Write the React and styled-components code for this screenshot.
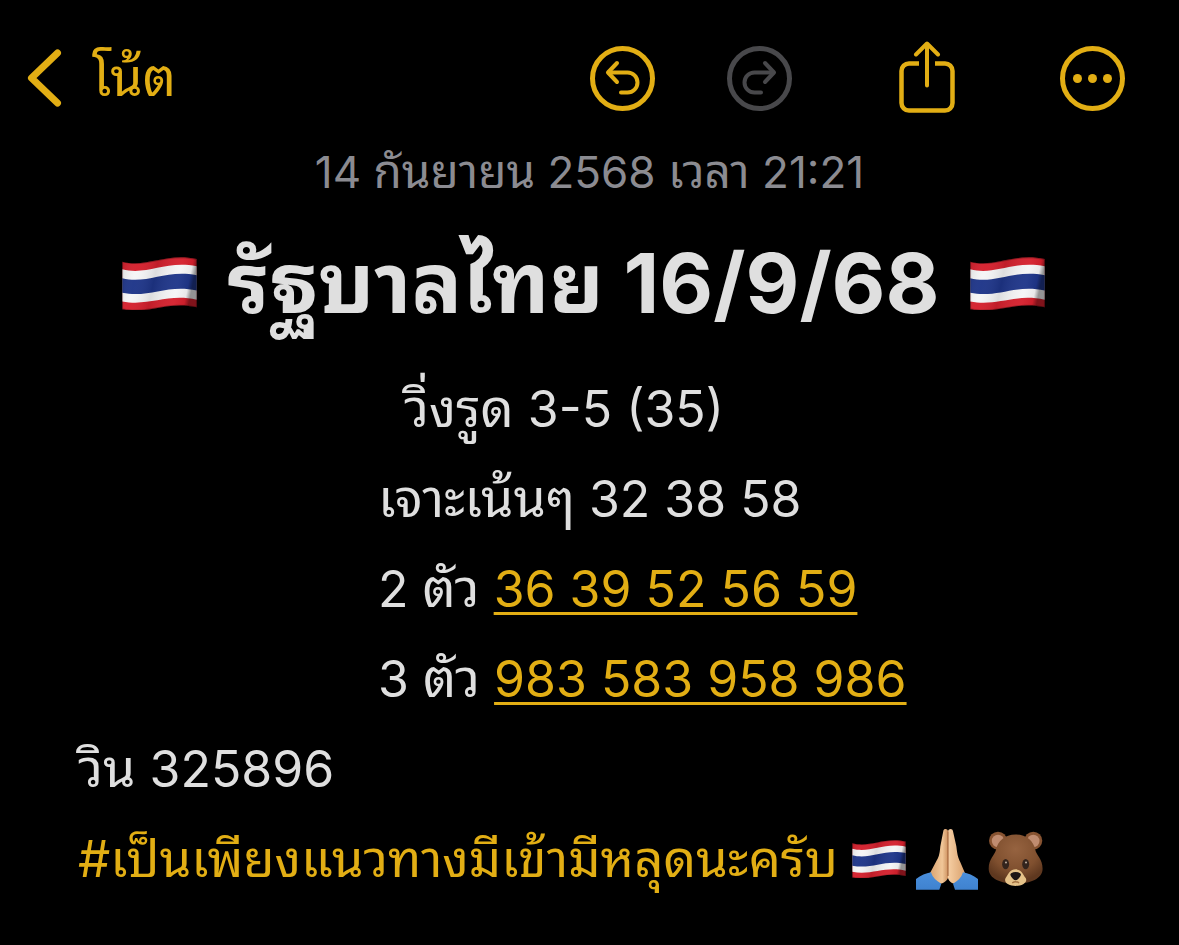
import React from "react";
import styled, { createGlobalStyle } from "styled-components";

const gold = "#e2ae14";
const ink = "#dfdfdf";

const GlobalStyle = createGlobalStyle`
  * { box-sizing: border-box; }
  html, body { margin: 0; background: #000; }
  body { font-family: Inter, "Noto Sans Thai Looped", "Loma", "Garuda", "Waree", "Noto Sans Thai", "Noto Sans", sans-serif; color: ${ink}; }
`;

const Page = styled.div`
  min-height: 100vh;
  background: #000;
`;

const Toolbar = styled.header`
  display: flex;
  align-items: center;
  justify-content: space-between;
  height: 144px;
  padding: 12px 54px 0 26px;
`;

const Actions = styled.div`
  display: flex;
  align-items: center;
  gap: ${(p) => p.$gap}px;
`;

const ToolButton = styled.button`
  display: flex;
  align-items: center;
  gap: 30px;
  padding: 0;
  border: 0;
  background: none;
  font: inherit;
  font-size: 52px;
  line-height: 60px;
  color: ${gold};
  cursor: pointer;
  &:disabled { color: #48484b; cursor: default; }
  svg { display: block; fill: none; stroke: currentColor; stroke-linecap: round; stroke-linejoin: round; }
`;

const ShareTray = styled.path`
  stroke-linecap: butt;
`;

const DateLine = styled.time`
  display: block;
  height: 56px;
  line-height: 56px;
  font-size: 44px;
  text-align: center;
  color: #8b8b91;
  white-space: nowrap;
`;

const Thai = styled.span`
  font-size: ${(p) => p.$size}px;
  line-height: 1;
`;

const Title = styled.h1`
  display: flex;
  align-items: center;
  justify-content: center;
  gap: 30px;
  margin: 0;
  padding: 2px 12px 0 0;
  height: 164px;
  font-size: 83px;
  line-height: 164px;
  font-weight: 700;
  white-space: nowrap;
`;

const Body = styled.main`
  padding: 0 78px;
`;

const Line = styled.p`
  margin: 0;
  padding-left: ${(p) => p.$indent || 0}px;
  height: 90px;
  font-size: 50px;
  line-height: 90px;
  white-space: nowrap;
`;

const TagLine = styled.div`
  display: flex;
  align-items: center;
  height: 90px;
  font-size: 51px;
  line-height: 90px;
  white-space: nowrap;
  color: ${gold};
`;

const NumberLink = styled.a`
  color: ${gold};
  text-decoration: underline;
  text-decoration-thickness: 3px;
  text-underline-offset: 5px;
  text-decoration-skip-ink: none;
`;

const EmojiRow = styled.span`
  display: flex;
  align-items: center;
  gap: 10px;
  margin-left: 14px;
`;

const Drawing = styled.svg`
  display: block;
  flex: none;
`;

function Flag({ width, id }) {
  return (
    <Drawing width={width} height={Math.round((width * 160) / 225)} viewBox="0 0 225 160" role="img" aria-label="ธงชาติไทย">
      <defs>
        <linearGradient id={id} x1="0" x2="1" y1="0" y2="0.15">
          <stop offset="0" stopColor="#000" stopOpacity="0.12" />
          <stop offset="0.22" stopColor="#fff" stopOpacity="0.03" />
          <stop offset="0.48" stopColor="#000" stopOpacity="0.1" />
          <stop offset="0.8" stopColor="#fff" stopOpacity="0.04" />
          <stop offset="0.94" stopColor="#000" stopOpacity="0.05" />
          <stop offset="1" stopColor="#000" stopOpacity="0.4" />
        </linearGradient>
      </defs>
      <path d="M0 14C75 34 130-14 225 6V152C135 132 82 174 0 158Z" fill="#d5202d" />
      <path d="M0 37C75 57 130 9 225 28V129C135 109 82 150 0 134Z" fill="#f5f5f6" />
      <path d="M0 64C75 84 130 36 225 55V101C135 81 82 125 0 108Z" fill="#1e3589" />
      <path d="M0 14C75 34 130-14 225 6V152C135 132 82 174 0 158Z" fill={`url(#${id})`} />
      <path d="M1 15C75 35 130-13 224 7V151C135 131 82 173 1 157Z" fill="none" stroke="#000" strokeOpacity="0.3" strokeWidth="3" />
    </Drawing>
  );
}

function Hands() {
  return (
    <Drawing width="62" height="62" viewBox="0 0 186 186" role="img" aria-label="พนมมือ">
      <defs>
        <linearGradient id="skin-left" x1="0" x2="1">
          <stop offset="0" stopColor="#d9a06c" />
          <stop offset="0.7" stopColor="#f0c698" />
          <stop offset="1" stopColor="#cf9361" />
        </linearGradient>
        <linearGradient id="skin-right" x1="0" x2="1">
          <stop offset="0" stopColor="#f6cfa4" />
          <stop offset="1" stopColor="#d9a06c" />
        </linearGradient>
        <linearGradient id="sleeve" x1="0" x2="0" y1="0" y2="1">
          <stop offset="0" stopColor="#4a8fdc" />
          <stop offset="1" stopColor="#3f82cf" />
        </linearGradient>
      </defs>
      <path d="M96 150V10C95 1 83 1 82 9L73 55C71 82 67 90 60 101L39 141L60 170C80 168 91 161 96 150Z" fill="url(#skin-left)" />
      <path d="M96 150V10C98 1 110 1 111 10L121 55C124 82 127 91 133 103L149 140L128 170C108 168 99 161 96 150Z" fill="url(#skin-right)" />
      <path d="M96 10V144" stroke="#9a5b32" strokeWidth="3" />
      <path d="M0 153Q22 137 45 133Q51 154 76 167L70 185H0Z" fill="url(#sleeve)" />
      <path d="M186 153Q164 137 141 133Q135 154 111 167L117 185H186Z" fill="url(#sleeve)" />
    </Drawing>
  );
}

function Bear() {
  return (
    <Drawing width="56" height="56" viewBox="0 0 162 162" role="img" aria-label="หมี">
      <defs>
        <radialGradient id="fur" cx="0.5" cy="0.3" r="0.65">
          <stop offset="0" stopColor="#966340" />
          <stop offset="0.65" stopColor="#80502f" />
          <stop offset="1" stopColor="#5f381f" />
        </radialGradient>
      </defs>
      <circle cx="29" cy="28" r="26" fill="#875331" />
      <circle cx="29" cy="29" r="18" fill="#c08c70" />
      <circle cx="131" cy="28" r="26" fill="#875331" />
      <circle cx="131" cy="29" r="18" fill="#c08c70" />
      <path d="M80 10C112 10 132 29 137 55C139 69 158 81 158 109C158 138 122 152 80 152C38 152 2 138 2 109C2 81 20 69 23 55C28 29 48 10 80 10Z" fill="url(#fur)" />
      <ellipse cx="51" cy="96" rx="10" ry="15" fill="#33241d" />
      <ellipse cx="109" cy="96" rx="10" ry="15" fill="#33241d" />
      <circle cx="52" cy="91" r="3" fill="#b9a99c" />
      <circle cx="110" cy="91" r="3" fill="#b9a99c" />
      <path d="M80 111C96 111 99 122 109 136C116 149 99 159 80 159C61 159 44 149 51 136C61 122 64 111 80 111Z" fill="#e5c289" />
      <path d="M67 122Q80 115 93 122C99 126 92 134 88 138Q80 147 72 138C68 134 61 126 67 122Z" fill="#1d1716" />
      <path d="M70 150Q80 144 90 150" fill="none" stroke="#a47343" strokeWidth="4" />
    </Drawing>
  );
}

function TurnIcon({ flip }) {
  return (
    <svg width="65" height="65" viewBox="0 0 65 65" aria-hidden="true">
      <circle cx="32.5" cy="32.5" r="30" strokeWidth="5" />
      <g transform={flip ? "translate(65 0) scale(-1 1)" : undefined} strokeWidth="4">
        <path d="M27 17L18 26.500L27 36" />
        <path d="M18.500 26.500H37.500A9.900 9.900 0 0 1 37.500 46.500H31" />
      </g>
    </svg>
  );
}

export default function App() {
  return (
    <Page>
      <GlobalStyle />
      <Toolbar>
        <ToolButton type="button">
          <svg width="36" height="60" viewBox="0 0 36 60" strokeWidth="7" aria-hidden="true">
            <path d="M31.500 5L5.500 30L31.500 55" />
          </svg>
          โน้ต
        </ToolButton>
        <Actions $gap={105}>
          <Actions $gap={72}>
            <ToolButton type="button" aria-label="เลิกทำ"><TurnIcon /></ToolButton>
            <ToolButton type="button" aria-label="ทำซ้ำ" disabled><TurnIcon flip /></ToolButton>
          </Actions>
          <ToolButton type="button" aria-label="แชร์">
            <svg width="58" height="74" viewBox="-1 1 58 74" strokeWidth="4.5" aria-hidden="true">
              <ShareTray d="M21 23.500H11A7.500 7.500 0 0 0 3.500 31V63A7.500 7.500 0 0 0 11 70.500H47A7.500 7.500 0 0 0 54.500 63V31A7.500 7.500 0 0 0 47 23.500H37" />
              <path d="M29 4V45.500M18 14.500L29 3.500L40 14.500" strokeWidth="4" />
            </svg>
          </ToolButton>
          <ToolButton type="button" aria-label="เพิ่มเติม">
            <svg width="65" height="65" viewBox="0 0 65 65" aria-hidden="true">
              <circle cx="32.500" cy="32.500" r="30" strokeWidth="5" />
              <g fill="currentColor" stroke="none">
                <circle cx="17.500" cy="32.500" r="4.500" />
                <circle cx="32.500" cy="32.500" r="4.500" />
                <circle cx="47.500" cy="32.500" r="4.500" />
              </g>
            </svg>
          </ToolButton>
        </Actions>
      </Toolbar>
      <DateLine dateTime="2025-09-14T21:21">
        14 <Thai $size={46}>กันยายน</Thai> 2568 <Thai $size={46}>เวลา</Thai> 21:21
      </DateLine>
      <Title>
        <Flag width={75} id="flag-left" />
        <span><Thai $size={84}>รัฐบาลไทย</Thai> 16/9/68</span>
        <Flag width={75} id="flag-right" />
      </Title>
      <Body>
        <Line $indent={326}><Thai $size={52}>วิ่งรูด</Thai> 3-5 (35)</Line>
        <Line $indent={300}><Thai $size={52}>เจาะเน้นๆ</Thai> 32 38 58</Line>
        <Line $indent={300}>2 <Thai $size={52}>ตัว</Thai> <NumberLink href="#two">36 39 52 56 59</NumberLink></Line>
        <Line $indent={300}>3 <Thai $size={52}>ตัว</Thai> <NumberLink href="#three">983 583 958 986</NumberLink></Line>
        <Line><Thai $size={52}>วิน</Thai> 325896</Line>
        <TagLine>
          #เป็นเพียงแนวทางมีเข้ามีหลุดนะครับ
          <EmojiRow>
            <Flag width={54} id="flag-small" />
            <Hands />
            <Bear />
          </EmojiRow>
        </TagLine>
      </Body>
    </Page>
  );
}
